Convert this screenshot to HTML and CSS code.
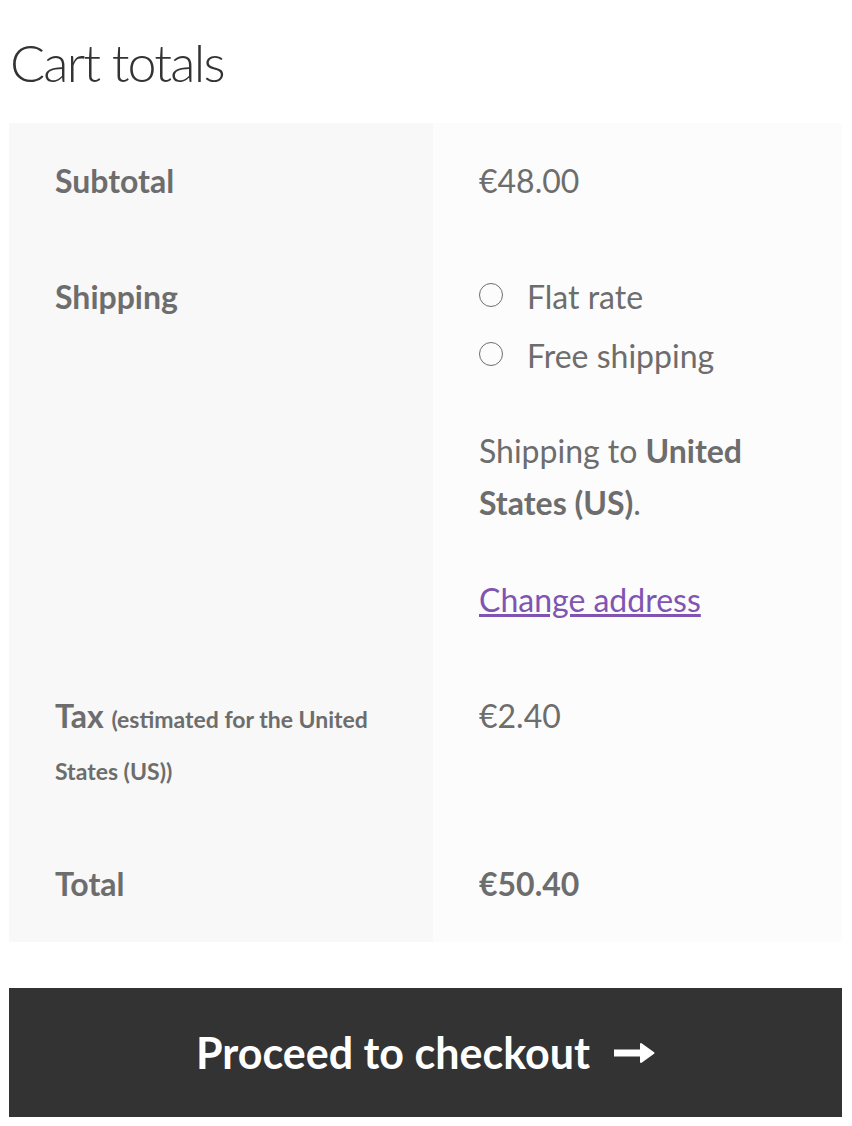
FILE: index.html
```html
<!DOCTYPE html>
<html lang="en">
<head>
    <meta charset="UTF-8">
    <meta name="viewport" content="width=device-width, initial-scale=1.0">
    <title>Cart totals</title>
    <link rel="stylesheet" href="styles.css">
</head>
<body>
    <div class="cart-collaterals">
        <h2>Cart totals</h2>
        <table class="shop-table">
            <tr>
                <th>Subtotal</th>
                <td>€48.00</td>
            </tr>
            <tr>
                <th>Shipping</th>
                <td>
                    <ul class="shipping-methods">
                        <li><span class="radio"></span><label>Flat rate</label></li>
                        <li><span class="radio"></span><label>Free shipping</label></li>
                    </ul>
                    <p class="destination">Shipping to <strong>United States (US)</strong>.</p>
                    <p class="change"><a href="#">Change address</a></p>
                </td>
            </tr>
            <tr>
                <th>Tax <small>(estimated for the United States (US))</small></th>
                <td>€2.40</td>
            </tr>
            <tr>
                <th>Total</th>
                <td><strong>€50.40</strong></td>
            </tr>
        </table>
        <a class="checkout-button" href="#">
            Proceed to checkout
            <svg class="arrow" width="41" height="22" viewBox="0 0 41 22">
                <rect x="0" y="7.5" width="30" height="7" fill="#fff"/>
                <path d="M27 2 L39.5 11 L27 20 Z" fill="#fff" stroke="#fff" stroke-width="2" stroke-linejoin="round"/>
            </svg>
        </a>
    </div>
</body>
</html>
```

FILE: styles.css
```css
body {
    margin: 0;
    font-family: Lato, "Open Sans", sans-serif;
    color: #6d6d6d;
    background-color: #fff;
}
.cart-collaterals {
    width: 833px;
    margin-left: 9px;
}
.cart-collaterals h2 {
    font-size: 52px;
    font-weight: 300;
    line-height: 64px;
    letter-spacing: -1.8px;
    color: #333;
    margin: 30px 0 29px 1px;
}
.shop-table {
    width: 100%;
    border-collapse: collapse;
    font-size: 32px;
    line-height: 52px;
}
.shop-table th,
.shop-table td {
    vertical-align: top;
    text-align: left;
    padding: 32px 46px;
}
.shop-table th {
    width: 332px;
    background-color: #f8f8f8;
    font-weight: bold;
}
.shop-table td {
    background-color: #fcfcfc;
}
.shop-table small {
    font-size: 23px;
    line-height: 1;
}
.shipping-methods {
    list-style: none;
    margin: 0 0 43px;
    padding: 0;
}
.shipping-methods li {
    display: flex;
    align-items: center;
    margin-bottom: 7px;
}
.radio {
    width: 22px;
    height: 22px;
    border: 1.5px solid #6d6d6d;
    border-radius: 50%;
    margin: -4px 24px 0 0;
    flex-shrink: 0;
}
.destination {
    margin: 0 0 45px;
}
.change {
    margin: 0;
}
.change a {
    color: #7f54b3;
}
.checkout-button {
    display: flex;
    justify-content: center;
    align-items: center;
    margin-top: 46px;
    padding: 32px 0;
    background-color: #333;
    color: #fff;
    font-size: 43px;
    font-weight: bold;
    line-height: 65px;
    text-decoration: none;
}
.arrow {
    margin-left: 24px;
}
```
